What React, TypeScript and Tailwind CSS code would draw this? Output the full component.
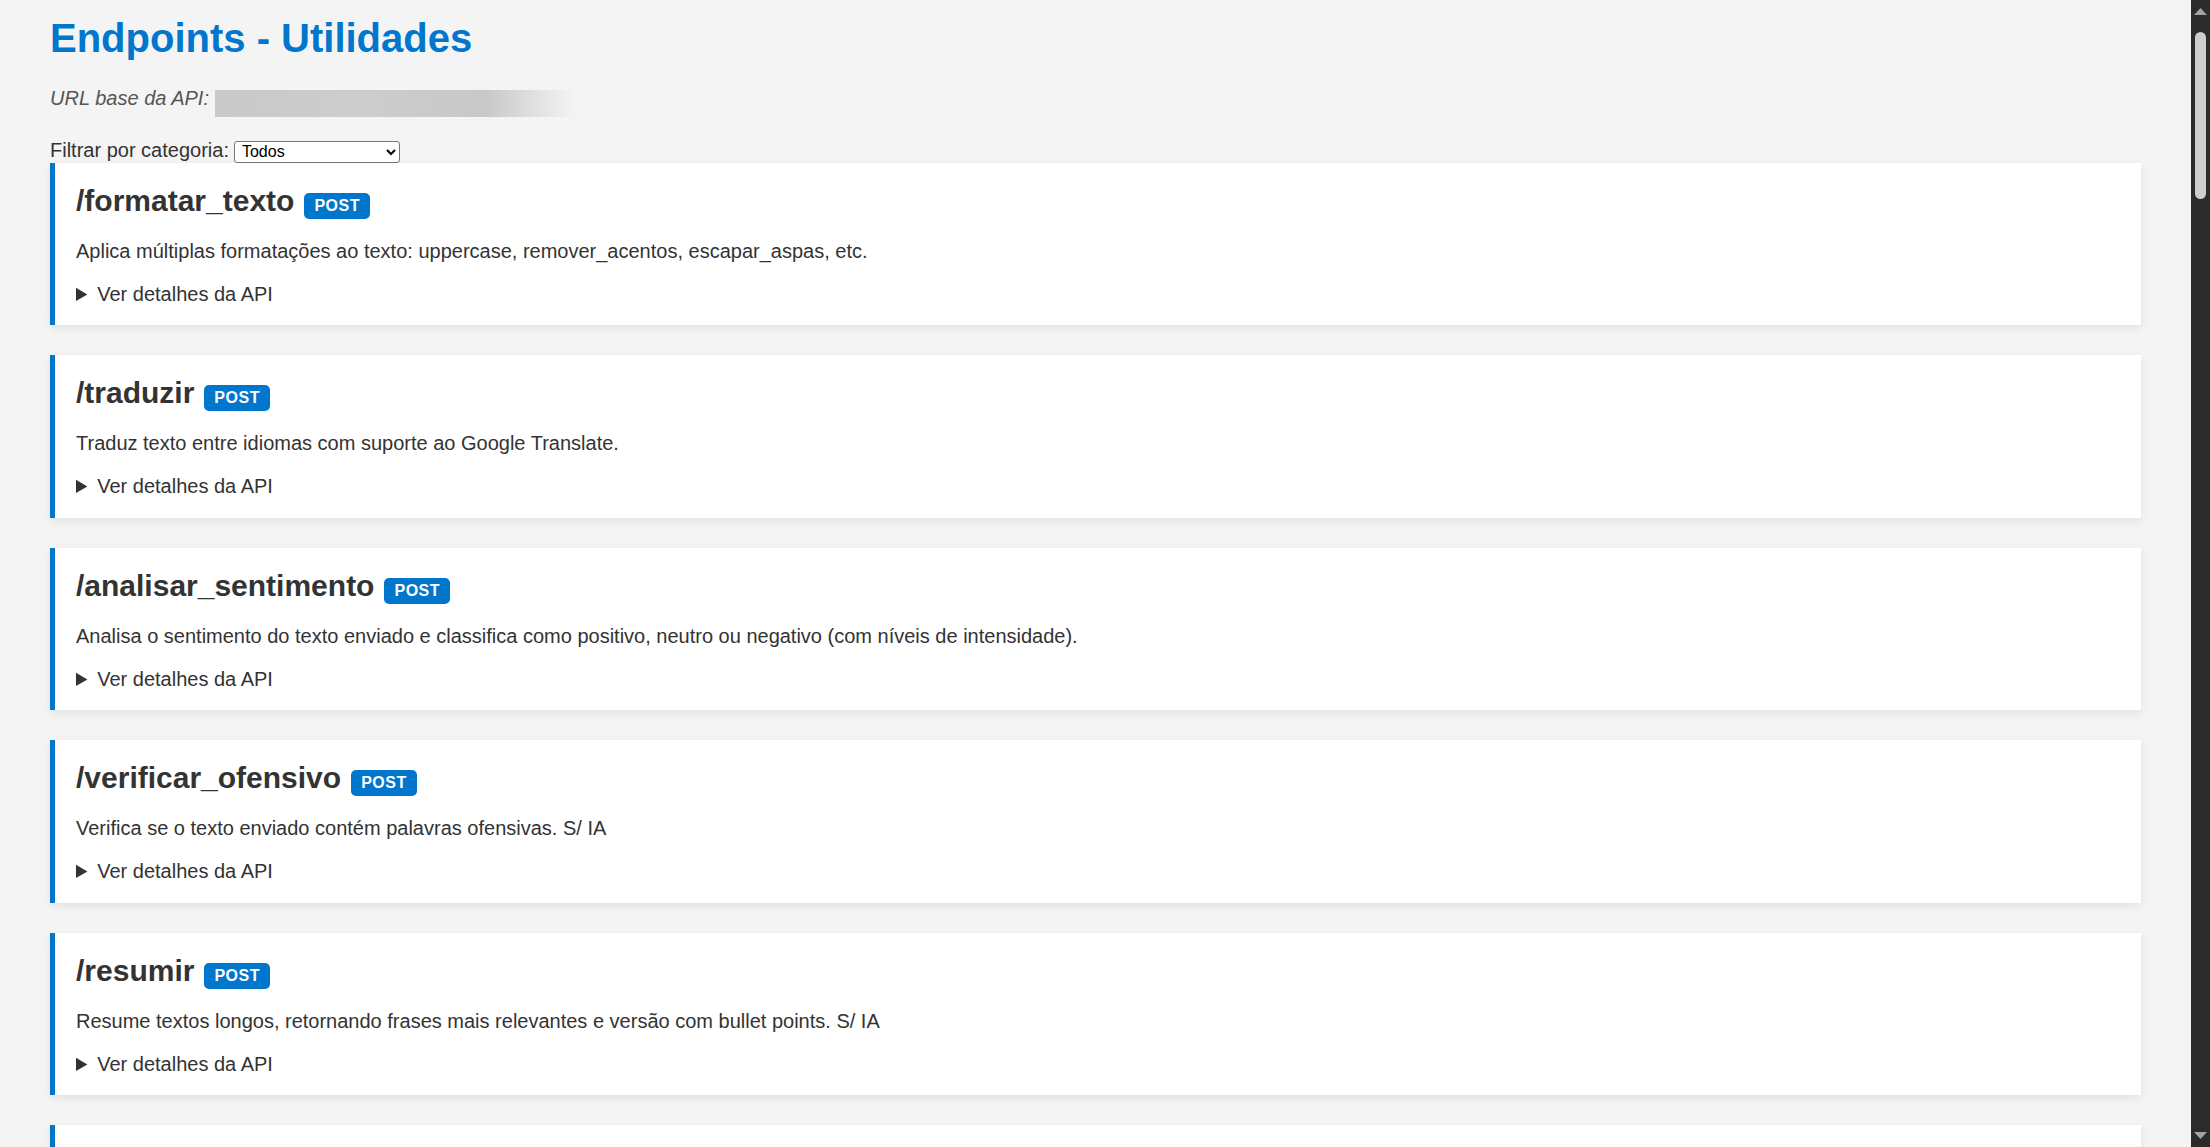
const endpoints = [
  {
    path: "/formatar_texto",
    method: "POST",
    description:
      "Aplica múltiplas formatações ao texto: uppercase, remover_acentos, escapar_aspas, etc.",
  },
  {
    path: "/traduzir",
    method: "POST",
    description: "Traduz texto entre idiomas com suporte ao Google Translate.",
  },
  {
    path: "/analisar_sentimento",
    method: "POST",
    description:
      "Analisa o sentimento do texto enviado e classifica como positivo, neutro ou negativo (com níveis de intensidade).",
  },
  {
    path: "/verificar_ofensivo",
    method: "POST",
    description: "Verifica se o texto enviado contém palavras ofensivas. S/ IA",
  },
  {
    path: "/resumir",
    method: "POST",
    description:
      "Resume textos longos, retornando frases mais relevantes e versão com bullet points. S/ IA",
  },
  {
    path: "/contar_palavras",
    method: "POST",
    description: "Conta palavras, caracteres e frases do texto.",
  },
];

function ScrollBar() {
  return (
    <div className="flex h-full w-[19px] shrink-0 flex-col items-center bg-[#2b2b2b] pt-[8px] pb-[8px]">
      <svg width="13" height="7" viewBox="0 0 13 7">
        <polygon points="0,7 6.5,0 13,7" fill="#a3a3a3" />
      </svg>
      <div className="mt-[17px] h-[167px] w-[11px] rounded-full bg-[#cecece]" />
      <div className="flex-1" />
      <svg width="13" height="7" viewBox="0 0 13 7">
        <polygon points="0,0 13,0 6.5,7" fill="#a3a3a3" />
      </svg>
    </div>
  );
}

export default function App() {
  return (
    <div className="flex h-screen overflow-hidden bg-[#f4f4f4] font-['Liberation_Sans',Arial,sans-serif] text-[20px] text-[#333]">
      <div className="min-w-0 flex-1 px-[50px] pt-[15px]">
        <h1 className="text-[40px] font-bold leading-[46px] text-[#0077cc]">
          Endpoints - Utilidades
        </h1>

        <div className="mt-[26px] flex items-start">
          <span className="leading-[23px] italic text-[#555]">URL base da API:</span>
          <span className="ml-[6px] mt-[3px] h-[27px] w-[360px] bg-[linear-gradient(to_right,#c9c9c9_0%,#cdcdcd_40%,#c8c8c8_75%,rgba(200,200,200,0)_100%)]" />
        </div>

        <div className="mt-[22px] flex items-baseline">
          <label htmlFor="categoria" className="leading-[23px]">
            Filtrar por categoria:
          </label>
          <select
            id="categoria"
            defaultValue="todos"
            className="ml-[5px] h-[22px] w-[166px] rounded-[3px] border border-[#767676] bg-white pl-[3px] text-[16px] leading-[18px] text-black"
          >
            <option value="todos">Todos</option>
            <option value="texto">Texto</option>
            <option value="validacao">Validação</option>
            <option value="conversao">Conversão</option>
          </select>
        </div>

        <div className="flex flex-col gap-[30px]">
          {endpoints.map((endpoint) => (
            <div
              key={endpoint.path}
              className="border-l-[5px] border-[#0077cc] bg-white pt-[20px] pr-[20px] pb-[19.5px] pl-[21px] shadow-[0_3px_8px_rgba(0,0,0,0.08)]"
            >
              <h2 className="text-[30px] font-bold leading-[35px] text-[#333]">
                {endpoint.path}
                <span className="ml-[10px] inline-block rounded-[5px] bg-[#0077cc] px-[10px] py-[4px] align-baseline text-[16px] leading-[18px] font-bold tracking-[0.5px] text-white">
                  {endpoint.method}
                </span>
              </h2>

              <p className="mt-[21px] leading-[23px]">{endpoint.description}</p>

              <details className="mt-[20px] leading-[23px]">
                <summary className="cursor-pointer">Ver detalhes da API</summary>
              </details>
            </div>
          ))}
        </div>
      </div>

      <ScrollBar />
    </div>
  );
}
